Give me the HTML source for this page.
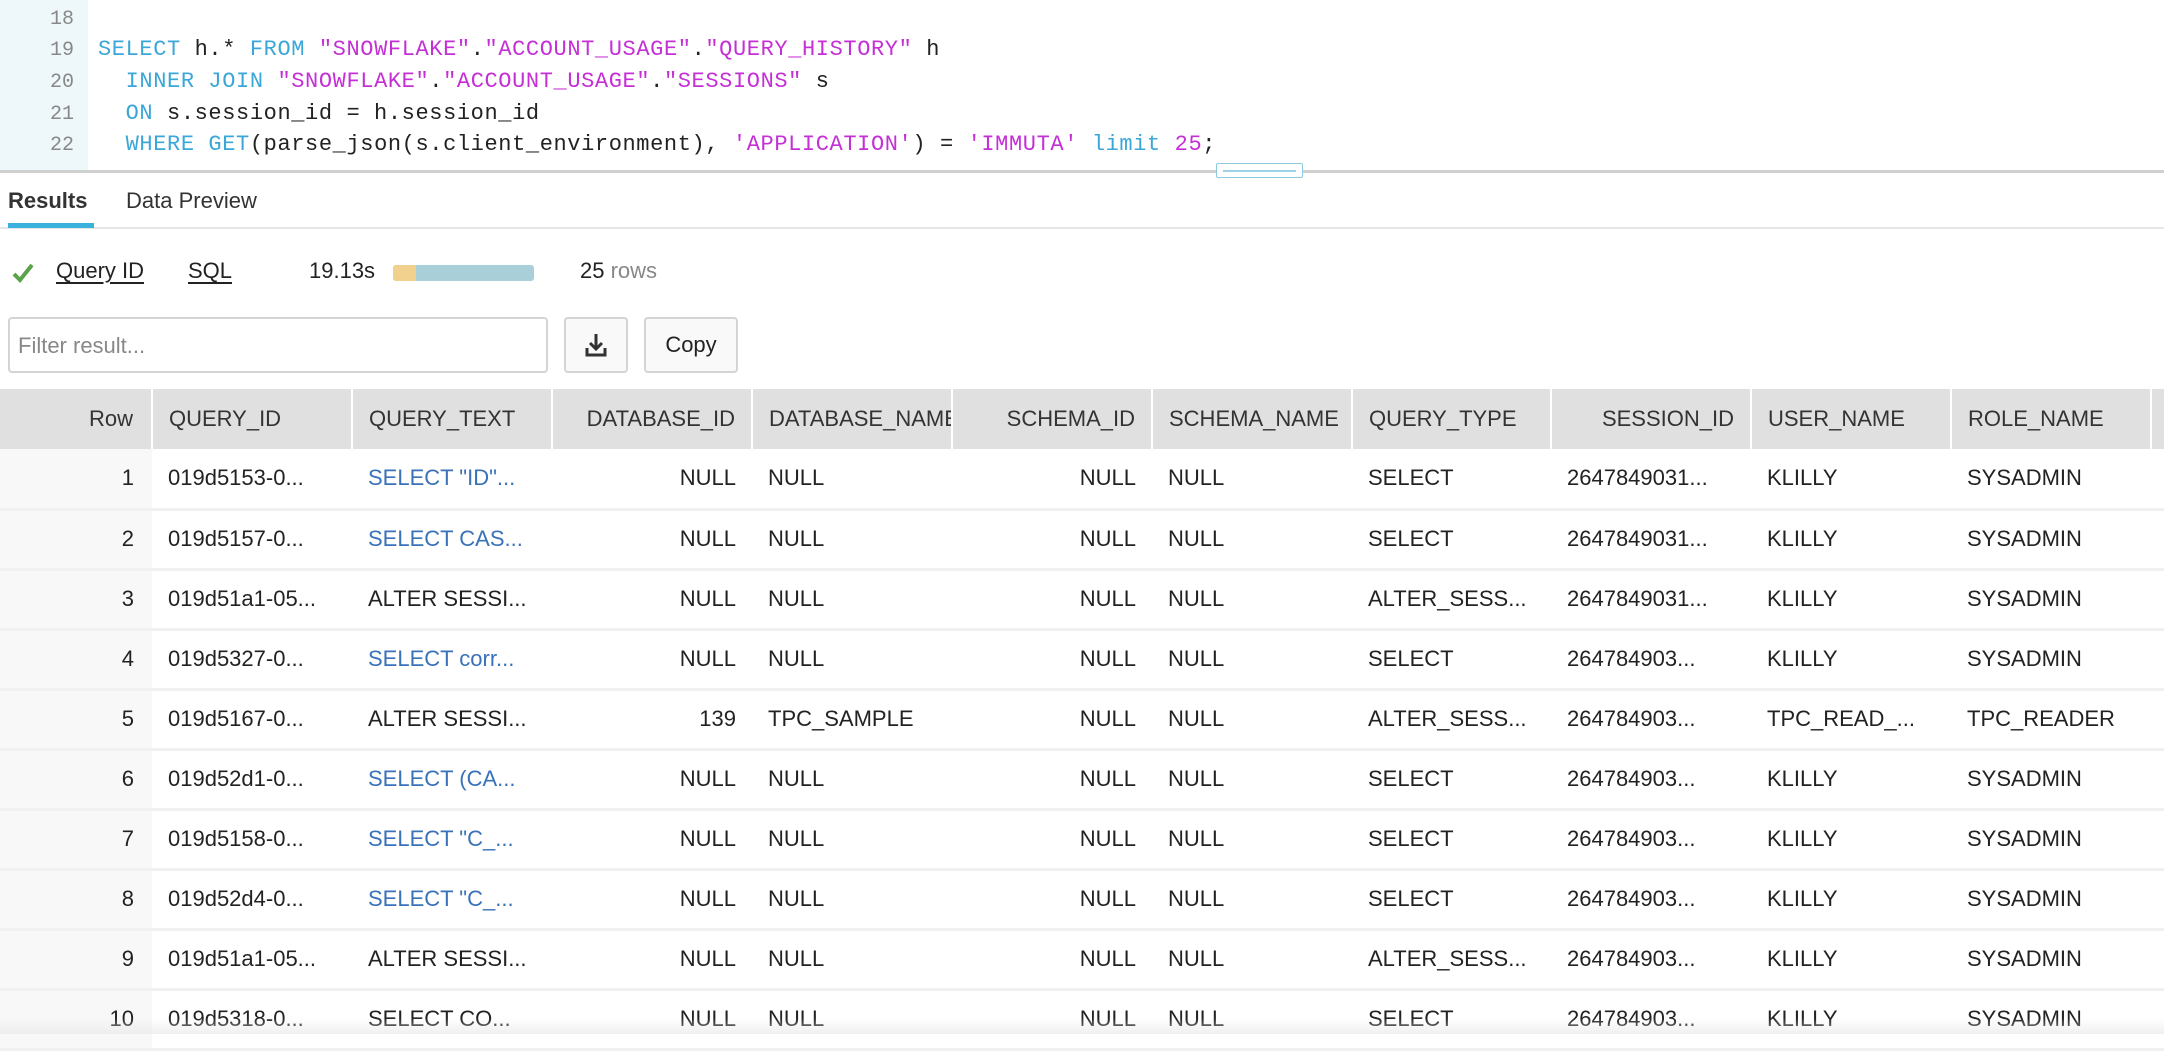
<!DOCTYPE html>
<html><head><meta charset="utf-8">
<style>
*{box-sizing:border-box;margin:0;padding:0}
body{width:2164px;height:1034px;overflow:hidden;background:#fff;font-family:"Liberation Sans",Arial,sans-serif;color:#222;position:relative}
.gut{position:absolute;left:0;top:0;width:88px;height:170px;background:#eef8fb}
.ln{position:absolute;left:0;width:74px;text-align:right;font-family:"Liberation Mono",monospace;font-size:20px;color:#888}
.code{position:absolute;left:98px;font-family:"Liberation Mono",monospace;font-size:22px;letter-spacing:0.6px;color:#222;white-space:pre}
.k{color:#3aa7d8}.s{color:#c42fd6}
.div{position:absolute;left:0;top:170px;width:2164px;height:3px;background:#d0d0d0}
.handle{position:absolute;left:1216px;top:163px;width:87px;height:15px;border:1px solid #8fcbe0;border-radius:2px;background:#fff}
.handle:after{content:"";position:absolute;left:6px;right:6px;top:6px;height:2px;background:#9ed3e6}
.tab{position:absolute;top:188px;font-size:22px}
.tabline{position:absolute;left:0;top:227px;width:2164px;height:2px;background:#e6e6e6}
.ul{position:absolute;left:8px;top:223px;width:86px;height:5px;background:#3bb1de}
.st{position:absolute;top:258px;font-size:22px}
.lnk{text-decoration:underline;text-underline-offset:4px}
.bar{position:absolute;left:393px;top:265px;width:141px;height:16px;border-radius:3px;background:#a9cfd9;overflow:hidden}
.bar i{position:absolute;left:0;top:0;width:23px;height:16px;background:#f2d08e}
.inp{position:absolute;left:8px;top:317px;width:540px;height:56px;border:2px solid #d4d4d4;border-radius:4px;font-size:22px;color:#888;padding:14px 8px}
.btn{position:absolute;top:317px;height:56px;border:2px solid #d4d4d4;border-radius:4px;background:#f9f9f9;font-size:22px;text-align:center;line-height:52px}
table{position:absolute;left:0;top:389px;width:2164px;border-collapse:collapse;table-layout:fixed;font-size:22px}
th{height:60px;background:#e0e0e0;font-weight:normal;color:#333;text-align:left;padding:0 16px;border-left:2px solid #fff;white-space:nowrap;overflow:hidden}
th:first-child{border-left:none}
td{height:60px;padding:0 16px;white-space:nowrap;overflow:hidden;border-bottom:3px solid #f0f0f0;color:#222}
td:first-child{background:#f8f8f8;text-align:right;padding-right:18px}
.r{text-align:right}
.b{color:#3a72b9}
.fade{position:absolute;left:0;top:1018px;width:2164px;height:16px;background:linear-gradient(rgba(255,255,255,0),rgba(230,230,230,.6))}
</style></head><body>
<div class="gut"></div>
<div class="ln" style="top:8px">18</div>
<div class="ln" style="top:39px">19</div>
<div class="ln" style="top:71px">20</div>
<div class="ln" style="top:103px">21</div>
<div class="ln" style="top:134px">22</div>
<div class="code" style="top:37px"><span class="k">SELECT</span> h.* <span class="k">FROM</span> <span class="s">"SNOWFLAKE"</span>.<span class="s">"ACCOUNT_USAGE"</span>.<span class="s">"QUERY_HISTORY"</span> h</div>
<div class="code" style="top:69px">  <span class="k">INNER JOIN</span> <span class="s">"SNOWFLAKE"</span>.<span class="s">"ACCOUNT_USAGE"</span>.<span class="s">"SESSIONS"</span> s</div>
<div class="code" style="top:101px">  <span class="k">ON</span> s.session_id = h.session_id</div>
<div class="code" style="top:132px">  <span class="k">WHERE GET</span>(parse_json(s.client_environment), <span class="s">'APPLICATION'</span>) = <span class="s">'IMMUTA'</span> <span class="k">limit</span> <span class="s">25</span>;</div>
<div class="div"></div>
<div class="handle"></div>
<div class="tab" style="left:8px;font-weight:bold;color:#333">Results</div>
<div class="tab" style="left:126px;color:#333">Data Preview</div>
<div class="tabline"></div><div class="ul"></div>
<svg style="position:absolute;left:12px;top:262px" width="22" height="22" viewBox="0 0 22 22"><path d="M2 12 L8 18 L20 3" stroke="#5aa34a" stroke-width="4" fill="none"/></svg>
<div class="st lnk" style="left:56px">Query ID</div>
<div class="st lnk" style="left:188px">SQL</div>
<div class="st" style="left:309px">19.13s</div>
<div class="bar"><i></i></div>
<div class="st" style="left:580px">25 <span style="color:#888">rows</span></div>
<div class="inp">Filter result...</div>
<div class="btn" style="left:564px;width:64px"><svg width="26" height="28" viewBox="0 0 26 28" style="margin-top:12px"><path d="M13 3V18M7 12L13 18L19 12" stroke="#333" stroke-width="3" fill="none"/><path d="M4 17V24H22V17" stroke="#333" stroke-width="3" fill="none"/></svg></div>
<div class="btn" style="left:644px;width:94px">Copy</div>
<table>
<colgroup><col style="width:152px"><col style="width:200px"><col style="width:200px"><col style="width:200px"><col style="width:200px"><col style="width:200px"><col style="width:200px"><col style="width:199px"><col style="width:200px"><col style="width:200px"><col style="width:200px"><col style="width:13px"></colgroup>
<tr><th class="r" style="padding-right:18px">Row</th><th>QUERY_ID</th><th>QUERY_TEXT</th><th class="r">DATABASE_ID</th><th style="padding-right:0">DATABASE_NAME</th><th class="r">SCHEMA_ID</th><th style="padding-right:0">SCHEMA_NAME</th><th>QUERY_TYPE</th><th class="r">SESSION_ID</th><th>USER_NAME</th><th>ROLE_NAME</th><th></th></tr>
<tr><td>1</td><td>019d5153-0...</td><td class="b">SELECT "ID"...</td><td class="r">NULL</td><td>NULL</td><td class="r">NULL</td><td>NULL</td><td>SELECT</td><td>2647849031...</td><td>KLILLY</td><td>SYSADMIN</td><td></td></tr>
<tr><td>2</td><td>019d5157-0...</td><td class="b">SELECT CAS...</td><td class="r">NULL</td><td>NULL</td><td class="r">NULL</td><td>NULL</td><td>SELECT</td><td>2647849031...</td><td>KLILLY</td><td>SYSADMIN</td><td></td></tr>
<tr><td>3</td><td>019d51a1-05...</td><td>ALTER SESSI...</td><td class="r">NULL</td><td>NULL</td><td class="r">NULL</td><td>NULL</td><td>ALTER_SESS...</td><td>2647849031...</td><td>KLILLY</td><td>SYSADMIN</td><td></td></tr>
<tr><td>4</td><td>019d5327-0...</td><td class="b">SELECT corr...</td><td class="r">NULL</td><td>NULL</td><td class="r">NULL</td><td>NULL</td><td>SELECT</td><td>264784903...</td><td>KLILLY</td><td>SYSADMIN</td><td></td></tr>
<tr><td>5</td><td>019d5167-0...</td><td>ALTER SESSI...</td><td class="r">139</td><td>TPC_SAMPLE</td><td class="r">NULL</td><td>NULL</td><td>ALTER_SESS...</td><td>264784903...</td><td>TPC_READ_...</td><td>TPC_READER</td><td></td></tr>
<tr><td>6</td><td>019d52d1-0...</td><td class="b">SELECT (CA...</td><td class="r">NULL</td><td>NULL</td><td class="r">NULL</td><td>NULL</td><td>SELECT</td><td>264784903...</td><td>KLILLY</td><td>SYSADMIN</td><td></td></tr>
<tr><td>7</td><td>019d5158-0...</td><td class="b">SELECT "C_...</td><td class="r">NULL</td><td>NULL</td><td class="r">NULL</td><td>NULL</td><td>SELECT</td><td>264784903...</td><td>KLILLY</td><td>SYSADMIN</td><td></td></tr>
<tr><td>8</td><td>019d52d4-0...</td><td class="b">SELECT "C_...</td><td class="r">NULL</td><td>NULL</td><td class="r">NULL</td><td>NULL</td><td>SELECT</td><td>264784903...</td><td>KLILLY</td><td>SYSADMIN</td><td></td></tr>
<tr><td>9</td><td>019d51a1-05...</td><td>ALTER SESSI...</td><td class="r">NULL</td><td>NULL</td><td class="r">NULL</td><td>NULL</td><td>ALTER_SESS...</td><td>264784903...</td><td>KLILLY</td><td>SYSADMIN</td><td></td></tr>
<tr><td>10</td><td>019d5318-0...</td><td>SELECT CO...</td><td class="r">NULL</td><td>NULL</td><td class="r">NULL</td><td>NULL</td><td>SELECT</td><td>264784903...</td><td>KLILLY</td><td>SYSADMIN</td><td></td></tr>
</table>
<div class="fade"></div>
</body></html>
